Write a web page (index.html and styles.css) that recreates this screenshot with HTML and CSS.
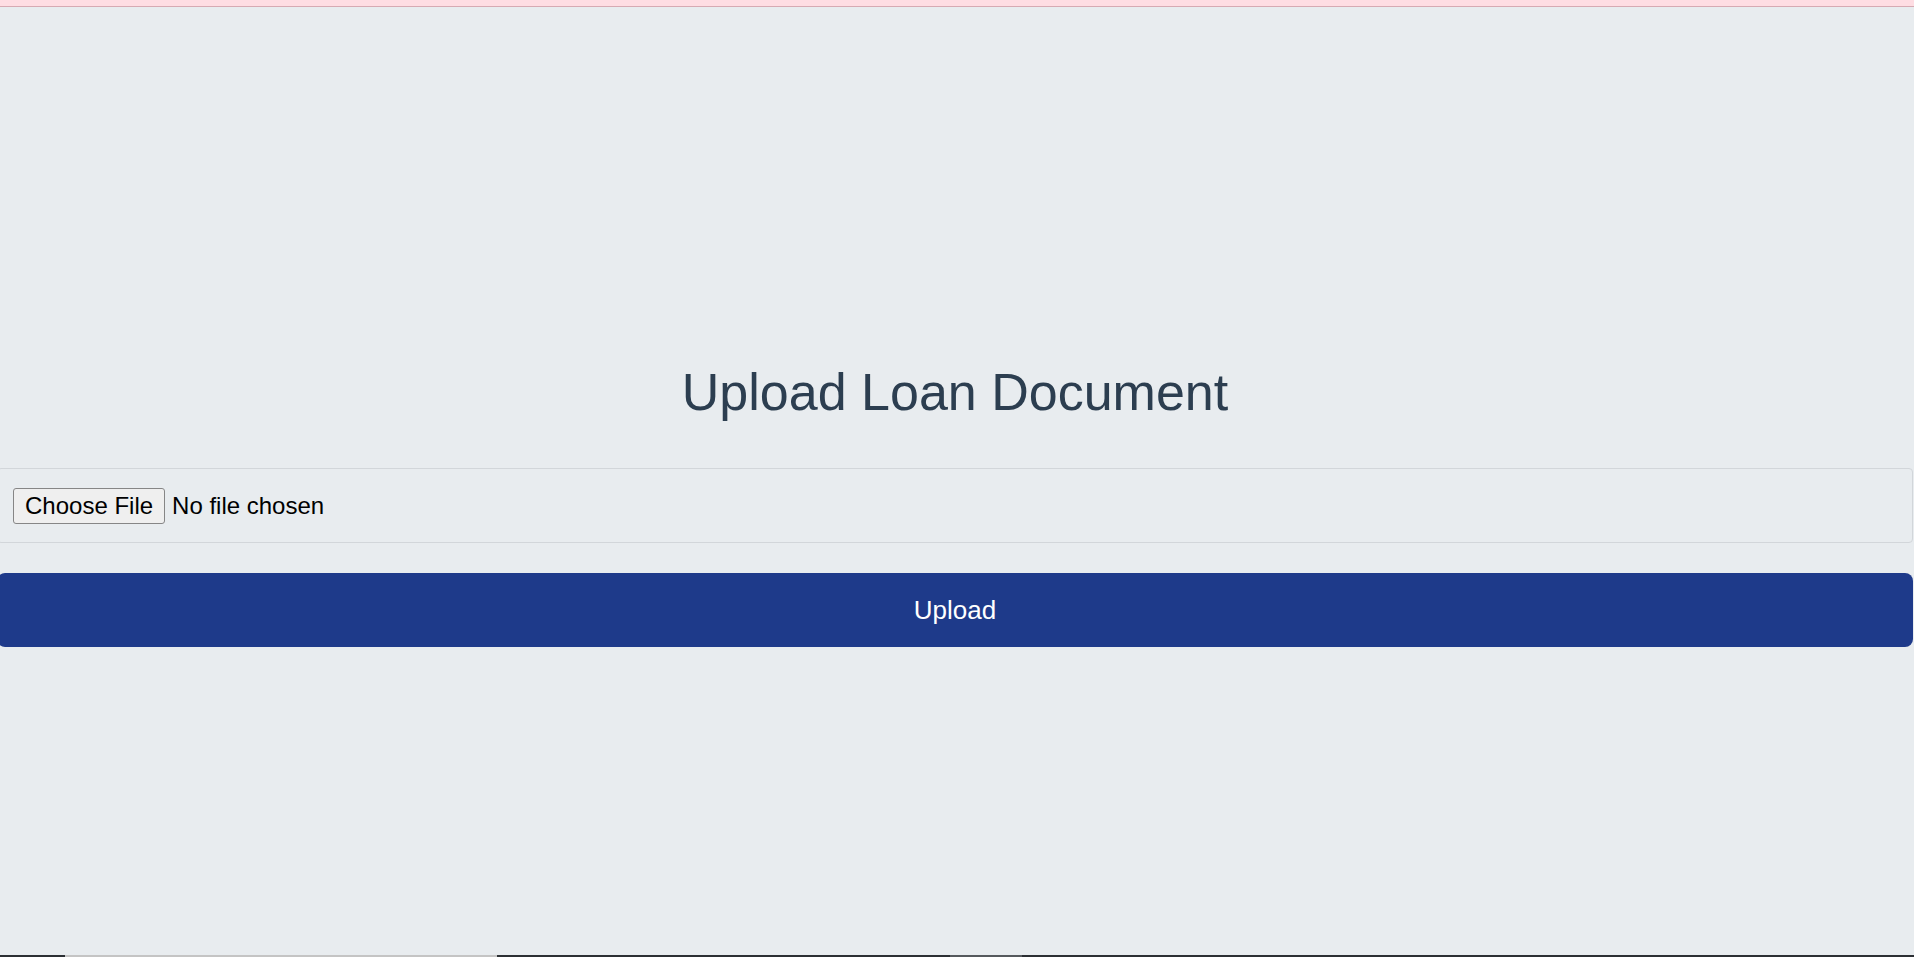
FILE: index.html
```html
<!DOCTYPE html>
<html lang="en">
<head>
<meta charset="utf-8">
<title>Upload Loan Document</title>
<link rel="stylesheet" href="styles.css">
</head>
<body>
<div class="alert-strip"></div>
<main class="page">
  <h1 class="title">Upload Loan Document</h1>
  <form class="upload-form">
    <div class="file-box">
      <input class="file-input" type="file" name="document">
    </div>
    <button class="upload-btn" type="button">Upload</button>
  </form>
</main>
<div class="bottom-strip">
  <span class="gap-a"></span>
  <span class="thumb"></span>
  <span class="gap-b"></span>
  <span class="thumb-dim"></span>
</div>
</body>
</html>
```
FILE: styles.css
```css
html, body {
  margin: 0;
  padding: 0;
  height: 100%;
  overflow: hidden;
}
body {
  background: #e8ecef;
  font-family: "Liberation Sans", Arial, sans-serif;
}
.alert-strip {
  height: 6px;
  background: #fedde3;
  border-bottom: 1px solid #d6aab3;
}
.page {
  padding-top: 355px;
  margin-left: -3px;
  width: calc(100% + 2px);
}
.title {
  margin: 0;
  text-align: center;
  font-size: 52px;
  line-height: 60px;
  font-weight: normal;
  color: #2c3e50;
}
.upload-form {
  margin-top: 46px;
  display: flex;
  flex-direction: column;
}
.file-box {
  box-sizing: border-box;
  height: 75px;
  border: 1px solid #d2d6da;
  border-radius: 4px;
  padding: 0 15px;
  display: flex;
  align-items: center;
}
.file-input {
  font-family: "Liberation Sans", Arial, sans-serif;
  font-size: 24px;
  color: #000;
}
.file-input::file-selector-button {
  height: 36px;
  padding: 0 11px;
  margin-right: 7px;
  border: 1px solid #868686;
  border-radius: 3px;
  background: #efefef;
  color: #000;
  font: inherit;
}
.upload-btn {
  margin-top: 30px;
  height: 74px;
  border: none;
  border-radius: 8px;
  background: #1e3a8a;
  color: #fff;
  font-family: "Liberation Sans", Arial, sans-serif;
  font-size: 26px;
}
.bottom-strip {
  position: fixed;
  left: 0;
  right: 0;
  bottom: 0;
  height: 2px;
  display: flex;
  background: #2b2f33;
}
.gap-a { width: 65px; }
.thumb { width: 432px; background: #c4c4c4; }
.gap-b { width: 453px; }
.thumb-dim { width: 72px; background: #55595d; }
```
